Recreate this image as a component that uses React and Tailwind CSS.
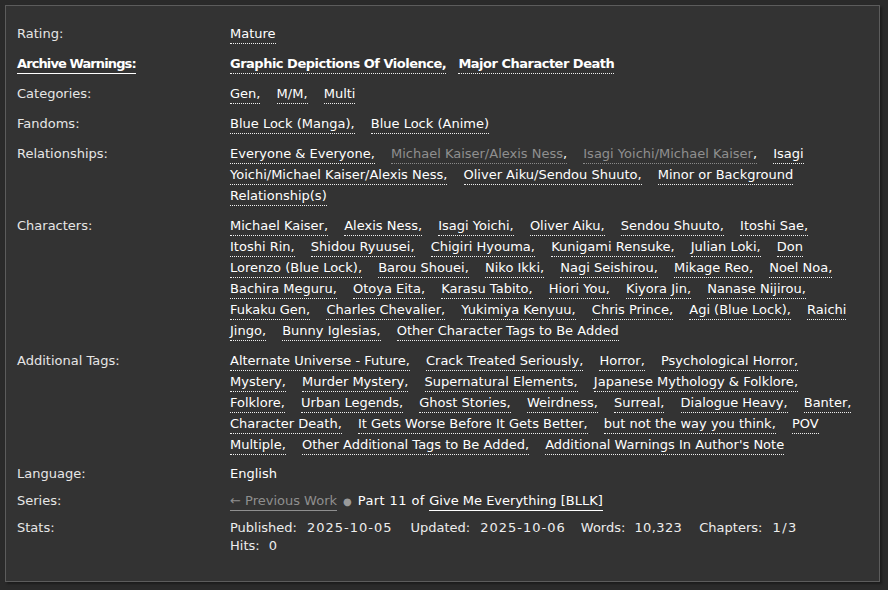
import React from 'react';

// "|" marks where the reference wraps inside a tag, br marks a wrap after a tag
const relationships = [
  { name: 'Everyone & Everyone' },
  { name: 'Michael Kaiser/Alexis Ness', visited: true },
  { name: 'Isagi Yoichi/Michael Kaiser', visited: true },
  { name: 'Isagi|Yoichi/Michael Kaiser/Alexis Ness' },
  { name: 'Oliver Aiku/Sendou Shuuto' },
  { name: 'Minor or Background|Relationship(s)' },
];

const characters = [
  'Michael Kaiser', 'Alexis Ness', 'Isagi Yoichi', 'Oliver Aiku', 'Sendou Shuuto', { name: 'Itoshi Sae', br: true },
  'Itoshi Rin', 'Shidou Ryuusei', 'Chigiri Hyouma', 'Kunigami Rensuke', 'Julian Loki',
  'Don|Lorenzo (Blue Lock)', 'Barou Shouei', 'Niko Ikki', 'Nagi Seishirou', 'Mikage Reo', { name: 'Noel Noa', br: true },
  'Bachira Meguru', 'Otoya Eita', 'Karasu Tabito', 'Hiori You', 'Kiyora Jin', { name: 'Nanase Nijirou', br: true },
  'Fukaku Gen', 'Charles Chevalier', 'Yukimiya Kenyuu', 'Chris Prince', 'Agi (Blue Lock)',
  'Raichi|Jingo', 'Bunny Iglesias', 'Other Character Tags to Be Added',
];

const freeforms = [
  'Alternate Universe - Future', 'Crack Treated Seriously', 'Horror', { name: 'Psychological Horror', br: true },
  'Mystery', 'Murder Mystery', 'Supernatural Elements', { name: 'Japanese Mythology & Folklore', br: true },
  'Folklore', 'Urban Legends', 'Ghost Stories', 'Weirdness', 'Surreal', 'Dialogue Heavy', { name: 'Banter', br: true },
  'Character Death', 'It Gets Worse Before It Gets Better', 'but not the way you think',
  'POV|Multiple', 'Other Additional Tags to Be Added', "Additional Warnings In Author's Note",
];

function TagList({ tags, bold }) {
  return (
    <>
      {tags.map((t, i) => {
        const tag = typeof t === 'string' ? { name: t } : t;
        const last = i === tags.length - 1;
        const parts = tag.name.split('|');
        return (
          <React.Fragment key={i}>
            <span
              className={`border-b border-dotted pb-[2px] ${
                tag.visited ? 'border-[#8a8a8a]' : 'border-[#f0f0f0]'
              } ${bold ? 'font-bold tracking-[-0.5px] mr-[8px]' : 'mr-3'}`}
            >
              <span className={tag.visited ? 'text-[#8f8f8f]' : 'text-white'}>
                {parts[0]}
                {parts.length > 1 && (
                  <>
                    <br />
                    {parts[1]}
                  </>
                )}
              </span>
              {!last && <span className="text-white">,</span>}
            </span>
            {!last && ' '}
            {tag.br && <br />}
          </React.Fragment>
        );
      })}
    </>
  );
}

function Row({ label, children, gap = 'mb-[9px]', labelClass = '', ddClass = '' }) {
  return (
    <>
      <dt className={`${gap} text-[#e6e6e6]`}>
        <span className={labelClass}>{label}</span>
      </dt>
      <dd className={`${gap} ${ddClass}`}>{children}</dd>
    </>
  );
}

export default function App() {
  return (
    <div
      className="min-h-[590px] bg-[#2a2a2a] p-[5px] text-[13px] leading-[21px]"
      style={{ fontFamily: '"DejaVu Sans", Verdana, sans-serif' }}
    >
      <dl className="w-[875px] border border-[#5c5c5c] bg-[#333333] pl-[11px] pt-[17px] pb-[26px] shadow-[2px_2px_2px_#1c1c1c] grid grid-cols-[213px_1fr]">
        <Row label="Rating:">
          <TagList tags={['Mature']} />
        </Row>
        <Row label="Archive Warnings:" labelClass="font-bold tracking-[-0.9px] text-white border-b border-white pb-[2px]">
          <TagList tags={['Graphic Depictions Of Violence', 'Major Character Death']} bold />
        </Row>
        <Row label="Categories:">
          <TagList tags={['Gen', 'M/M', 'Multi']} />
        </Row>
        <Row label="Fandoms:">
          <TagList tags={['Blue Lock (Manga)', 'Blue Lock (Anime)']} />
        </Row>
        <Row label="Relationships:">
          <TagList tags={relationships} />
        </Row>
        <Row label="Characters:">
          <TagList tags={characters} />
        </Row>
        <Row label="Additional Tags:" gap="mb-[8px]">
          <TagList tags={freeforms} />
        </Row>
        <Row label="Language:" gap="mb-[6px]">
          <span className="text-white">English</span>
        </Row>
        <Row label="Series:" gap="mb-[5px]">
          <span className="text-[#8f8f8f] border-b border-[#8f8f8f] pb-[2px]">← Previous Work</span>
          <span className="text-[#9a9a9a] text-[10px] mx-[6px]">●</span>
          <span className="text-white tracking-[0.4px]">Part 11 of </span>
          <span className="text-white border-b border-white pb-[2px]">Give Me Everything [BLLK]</span>
        </Row>
        <Row label="Stats:" gap="mb-0" ddClass="leading-[18px] pt-[2px]">
          <div className="text-[#ededed]">
            <span>Published:</span>
            <span className="ml-[10px] mr-[18px] tracking-[1px]">2025-10-05</span>
            <span>Updated:</span>
            <span className="ml-[10px] mr-[15px] tracking-[1px]">2025-10-06</span>
            <span>Words:</span>
            <span className="ml-[9px] mr-[17px] tracking-[0.4px]">10,323</span>
            <span>Chapters:</span>
            <span className="ml-[10px] tracking-[1.5px]">1/3</span>
          </div>
          <div className="text-[#ededed]">
            <span>Hits:</span>
            <span className="ml-[9px]">0</span>
          </div>
        </Row>
      </dl>
    </div>
  );
}
